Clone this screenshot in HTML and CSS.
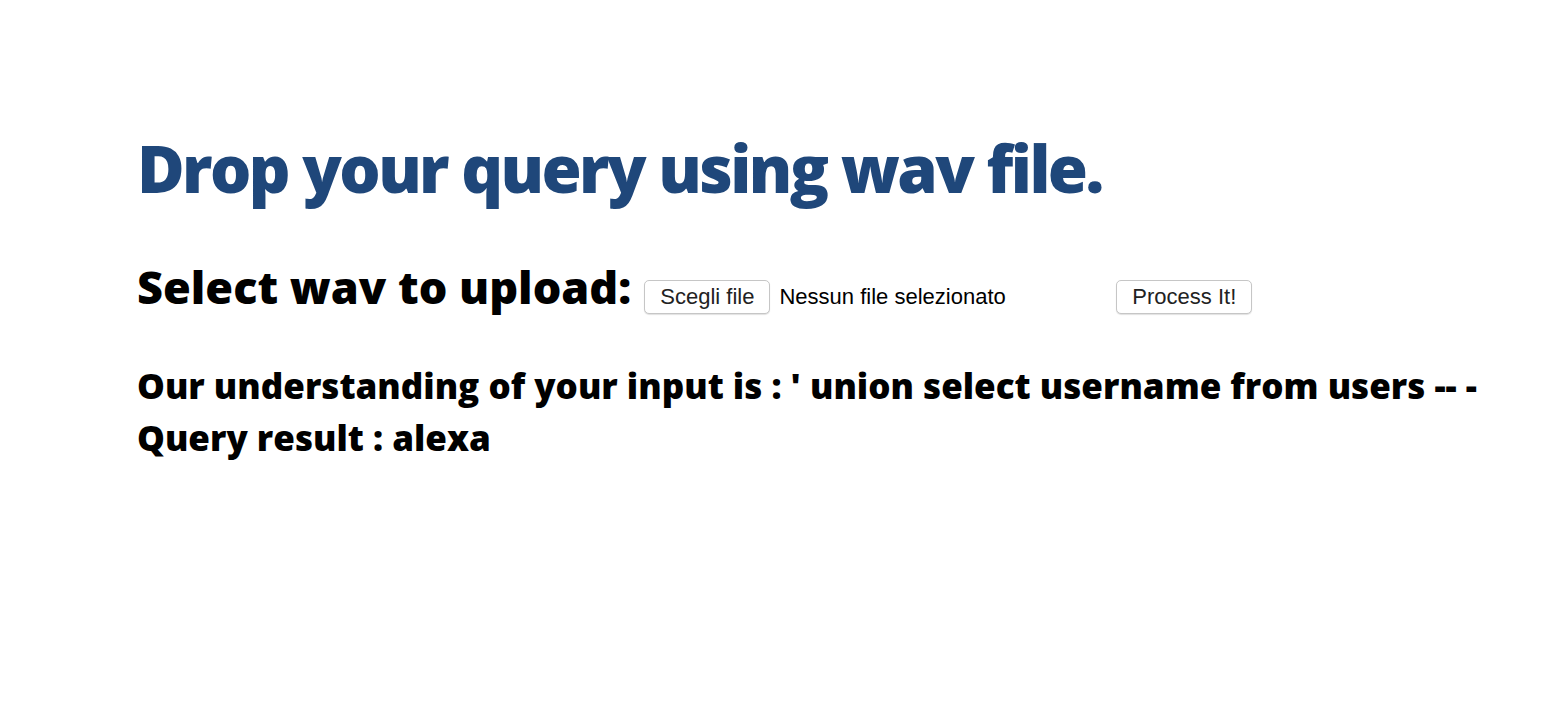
FILE: index.html
```html
<!DOCTYPE html>
<html>
<head>
<meta charset="utf-8">
<link rel="stylesheet" href="styles.css">
</head>
<body>
<main class="page">
  <h1 class="title">Drop your query using wav file.</h1>
  <form class="upload">
    <span class="label">Select wav to upload:</span>
    <span class="file">
      <button type="button" class="btn">Scegli file</button>
      <span class="file-name">Nessun file selezionato</span>
    </span>
    <button type="button" class="btn">Process It!</button>
  </form>
  <div class="result">
    <p class="line">Our understanding of your input is : ' union select username from users -- -</p>
    <p class="line">Query result : alexa</p>
  </div>
</main>
</body>
</html>
```
FILE: styles.css
```css
html, body {
  margin: 0;
  padding: 0;
  background: #fff;
}
.page {
  padding: 128px 0 0 137px;
  font-family: "Open Sans", "Liberation Sans", sans-serif;
}
.title {
  margin: 0;
  color: #1f477a;
  font-size: 65px;
  font-weight: 800;
  line-height: 80px;
  letter-spacing: -2.6px;
}
.upload {
  display: flex;
  align-items: baseline;
  margin-top: 48px;
  height: 64px;
}
.label {
  font-size: 45px;
  font-weight: 800;
  color: #000;
  margin-right: 13px;
}
.file {
  display: flex;
  align-items: baseline;
  width: 472px;
}
.btn {
  font-family: "Liberation Sans", Arial, sans-serif;
  font-size: 22px;
  color: #222;
  background: #fff;
  border: 1px solid #c6c6c6;
  border-radius: 5px;
  height: 34px;
  padding: 0 15px;
  box-shadow: 0 1px 1px rgba(0,0,0,0.12);
}
.file-name {
  font-family: "Liberation Sans", Arial, sans-serif;
  font-size: 22px;
  color: #000;
  margin-left: 9px;
}
.result {
  margin-top: 40px;
}
.line {
  margin: 0;
  font-size: 35px;
  font-weight: 800;
  line-height: 52px;
  color: #000;
}
```
